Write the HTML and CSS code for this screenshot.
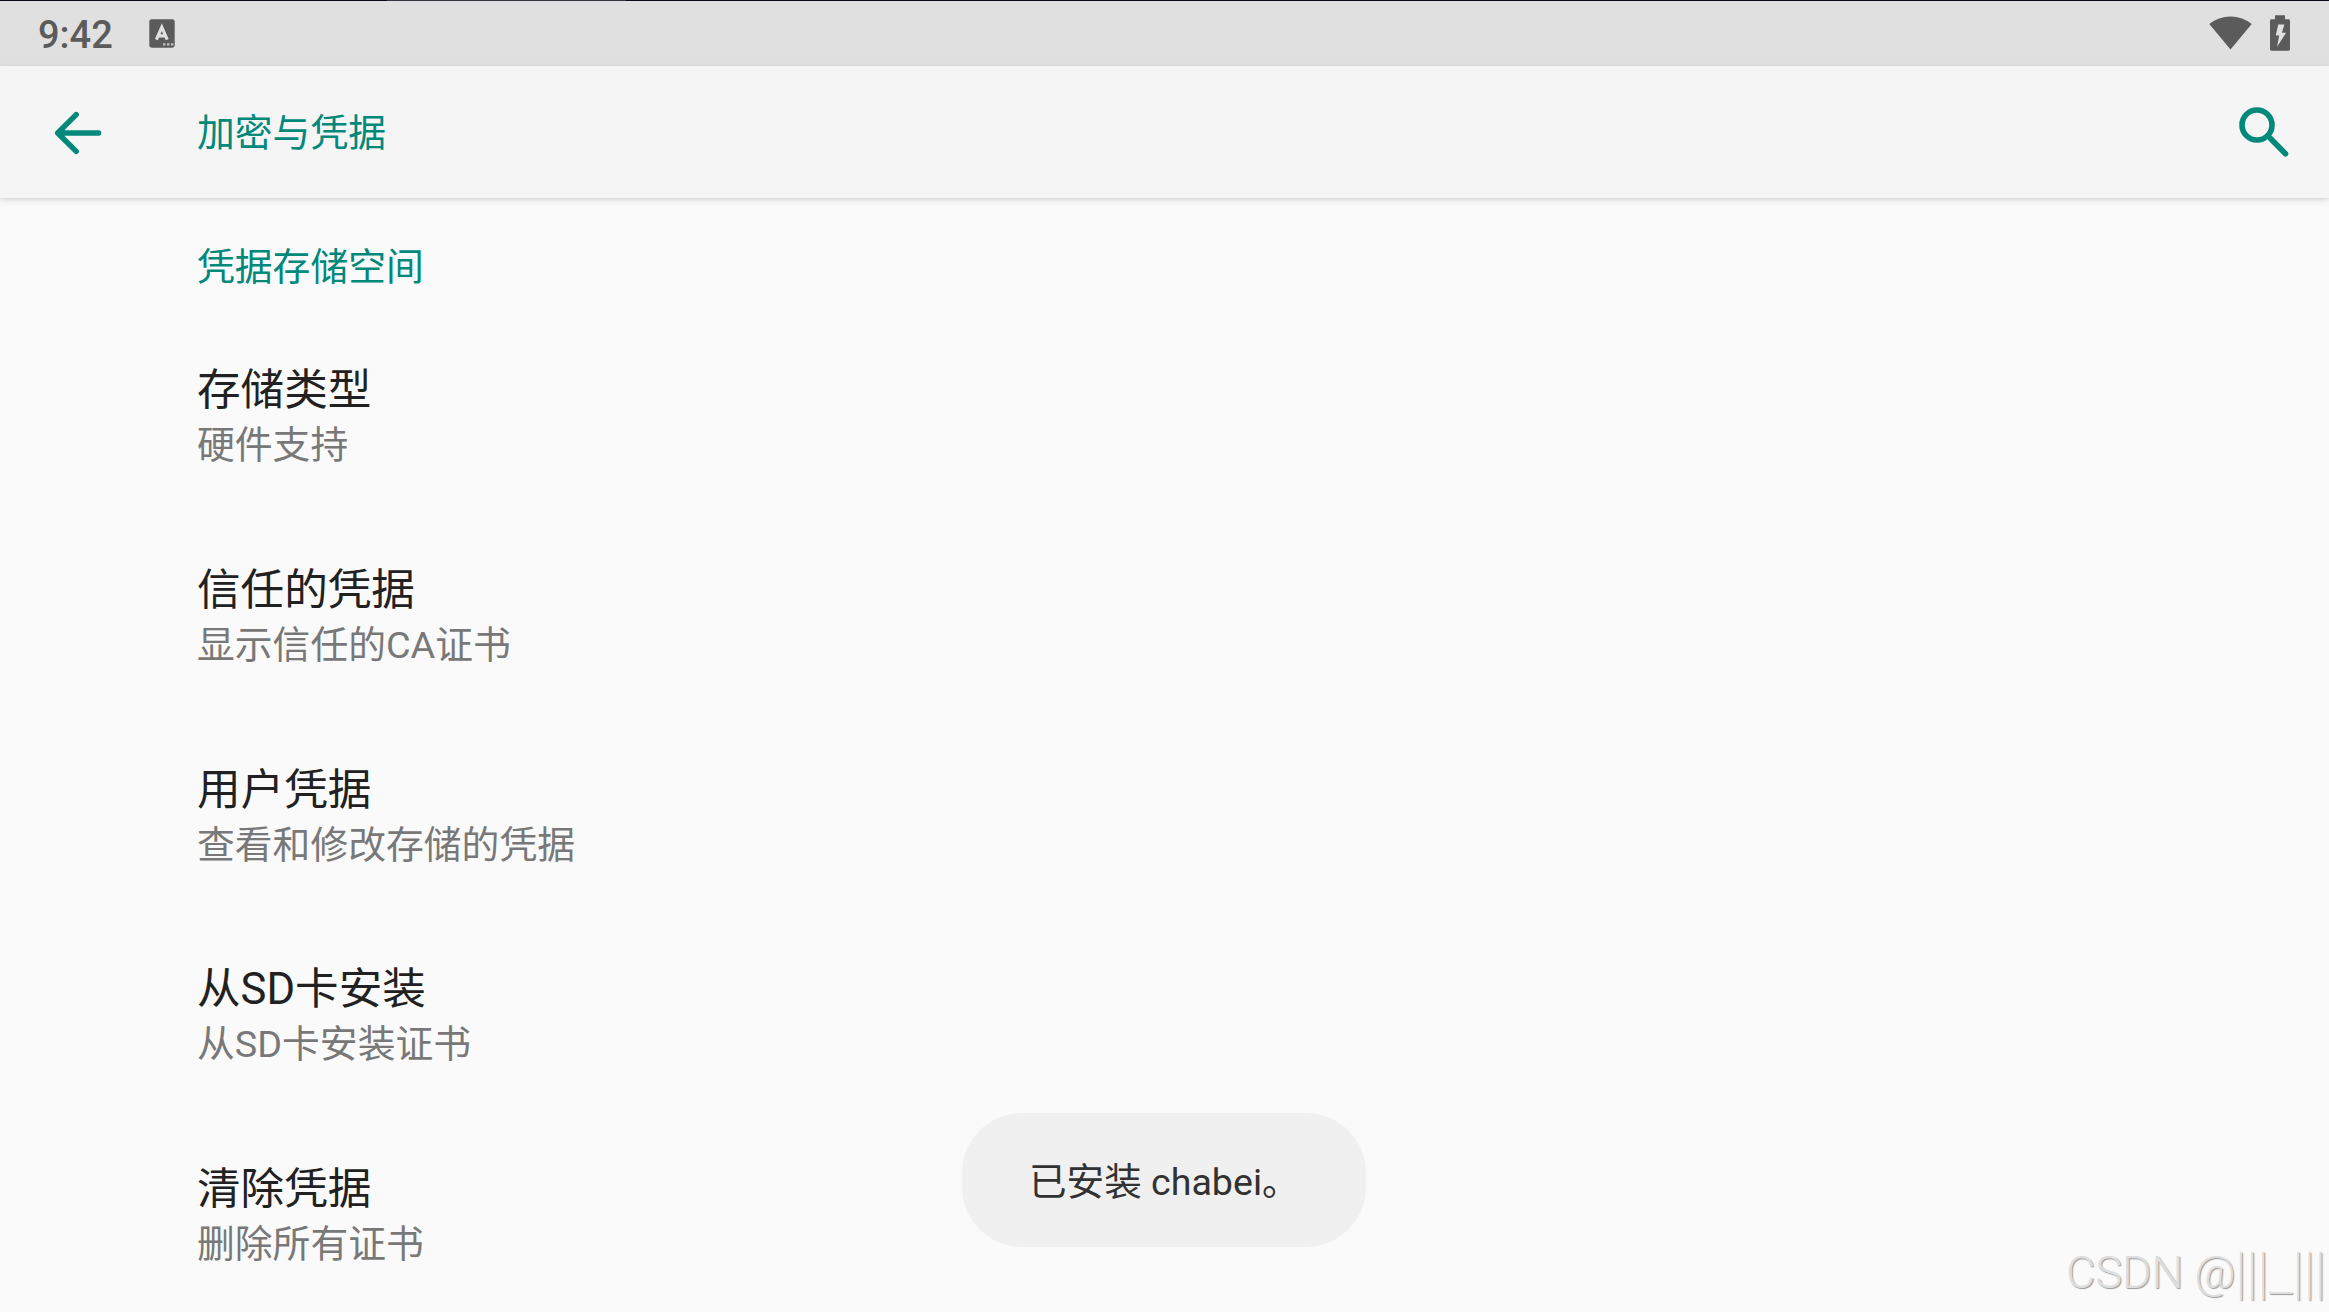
FILE: index.html
```html
<!DOCTYPE html>
<html lang="zh-CN">
<head>
    <meta charset="UTF-8">
    <meta name="viewport" content="width=device-width, initial-scale=1.0">
    <title>加密与凭据</title>
    <link rel="stylesheet" href="styles.css">
</head>
<body>
    <!-- Status bar -->
    <div class="status-bar">
        <span class="clock">9:42</span>
        <svg class="icon-input" viewBox="0 0 26 29">
            <rect x="0.3" y="0.3" width="25.4" height="28.4" rx="2.4" fill="#5b5b5b"/>
            <path d="M7.4 20.6 12.8 8.2 18.2 20.6M9.4 16.8h6.8" fill="none" stroke="#e0e0e0" stroke-width="3.2"/>
            <path d="M14 24.2h2.4v2.4H14zM18 24.2h2.4v2.4H18zM22 24.2h2.4v2.4H22z" fill="#c4c4c4"/>
        </svg>
        <div class="status-right">
            <svg class="icon-wifi" viewBox="0 0 43 34">
                <path d="M21.5 33.5 0.3 8Q9.5 0.4 21.5 0.4T42.7 8Z" fill="#5b5b5b"/>
            </svg>
            <svg class="icon-battery" viewBox="0 0 20 36">
                <path d="M5 0.3h10v4h3.6Q20 4.3 20 5.7v28.6q0 1.4-1.4 1.4H1.4Q0 35.7 0 34.3V5.7Q0 4.3 1.4 4.3H5z" fill="#5b5b5b"/>
                <path d="M8.2 9.5h6.2l-2.5 8.2h4.2L7.1 31.8l2.1-11.4H5.8z" fill="#e0e0e0"/>
            </svg>
        </div>
    </div>

    <!-- App bar -->
    <header class="app-bar">
        <svg class="icon-back" viewBox="0 0 49 44">
            <path d="M23.2 3.6 4.7 22 23.2 40.4M4.7 22h40.9" fill="none" stroke="#00897b" stroke-width="5.4" stroke-linecap="round" stroke-linejoin="round"/>
        </svg>
        <h1>加密与凭据</h1>
        <svg class="icon-search" viewBox="0 0 50 50">
            <circle cx="18" cy="18" r="15" fill="none" stroke="#00897b" stroke-width="5.6"/>
            <path d="M31.5 31.5 46.5 46.8" stroke="#00897b" stroke-width="5.6" stroke-linecap="round"/>
        </svg>
    </header>

    <main>
        <h2>凭据存储空间</h2>
        <div class="item">
            <div class="title">存储类型</div>
            <div class="summary">硬件支持</div>
        </div>
        <div class="item">
            <div class="title">信任的凭据</div>
            <div class="summary">显示信任的CA证书</div>
        </div>
        <div class="item">
            <div class="title">用户凭据</div>
            <div class="summary">查看和修改存储的凭据</div>
        </div>
        <div class="item">
            <div class="title">从SD卡安装</div>
            <div class="summary">从SD卡安装证书</div>
        </div>
        <div class="item">
            <div class="title">清除凭据</div>
            <div class="summary">删除所有证书</div>
        </div>
    </main>

    <div class="toast">已安装 chabei。</div>
    <div class="watermark">CSDN @<span class="handle">|||_|||</span></div>
</body>
</html>
```
FILE: styles.css
```css
:root {
    --accent: #00897b;
    --status-icon: #5b5b5b;
}

* {
    box-sizing: border-box;
}

body {
    margin: 0;
    height: 1312px;
    overflow: hidden;
    position: relative;
    background: #fafafa;
    font-family: Roboto, "Noto Sans CJK SC", sans-serif;
}

svg {
    display: block;
    flex-shrink: 0;
}

.status-bar {
    display: flex;
    align-items: flex-start;
    height: 66px;
    padding: 0 39px 0 38px;
    background: linear-gradient(to right, #0a0814 387px, #35333b 387px, #35333b 626px, #0a0814 626px) top / 100% 1px no-repeat #e0e0e0;
}

.clock {
    width: 111px;
    margin-top: 13px;
    font-size: 38px;
    font-weight: 500;
    line-height: 44px;
    color: var(--status-icon);
}

.icon-input {
    width: 26px;
    height: 29px;
    margin-top: 19px;
}

.status-right {
    display: flex;
    gap: 18px;
    margin: 15px 0 0 auto;
}

.icon-wifi {
    width: 43px;
    height: 34px;
    margin-top: 1px;
}

.icon-battery {
    width: 20px;
    height: 36px;
}

.app-bar {
    display: flex;
    align-items: center;
    height: 132px;
    padding: 0 40px 0 53px;
    background: #f5f5f5;
    box-shadow: 0 1px 3px rgba(0, 0, 0, 0.1), 0 3px 8px rgba(0, 0, 0, 0.08);
}

.icon-back {
    width: 49px;
    height: 44px;
    margin-top: 2px;
}

.app-bar h1 {
    margin: 2px 0 0 95px;
    font-size: 37.8px;
    font-weight: 400;
    line-height: 56px;
    color: var(--accent);
}

.icon-search {
    width: 50px;
    height: 50px;
    margin-left: auto;
}

main {
    padding: 41px 197px 0;
}

h2 {
    margin: 0 0 67px;
    font-size: 37.8px;
    font-weight: 400;
    line-height: 56px;
    color: var(--accent);
}

.item {
    height: 199.8px;
}

.title {
    font-size: 43.6px;
    line-height: 58px;
    color: #212121;
}

.summary {
    margin-top: -2px;
    font-size: 37.8px;
    line-height: 54px;
    color: #787878;
}

.toast {
    position: absolute;
    top: 1113px;
    left: 962px;
    width: 404px;
    height: 134px;
    padding: 2px 0 0 67px;
    border-radius: 60px;
    background: #f0f0f0;
    font-size: 37.6px;
    line-height: 134px;
    white-space: nowrap;
    color: #323232;
}

.watermark {
    position: absolute;
    right: 3px;
    bottom: 12px;
    font-size: 45px;
    font-weight: 300;
    line-height: 54px;
    color: #dedede;
    text-shadow: 1px 1px 1px #999;
}

.handle {
    font-family: "Noto Sans CJK SC", sans-serif;
    font-size: 43.5px;
    line-height: 1;
}
```
